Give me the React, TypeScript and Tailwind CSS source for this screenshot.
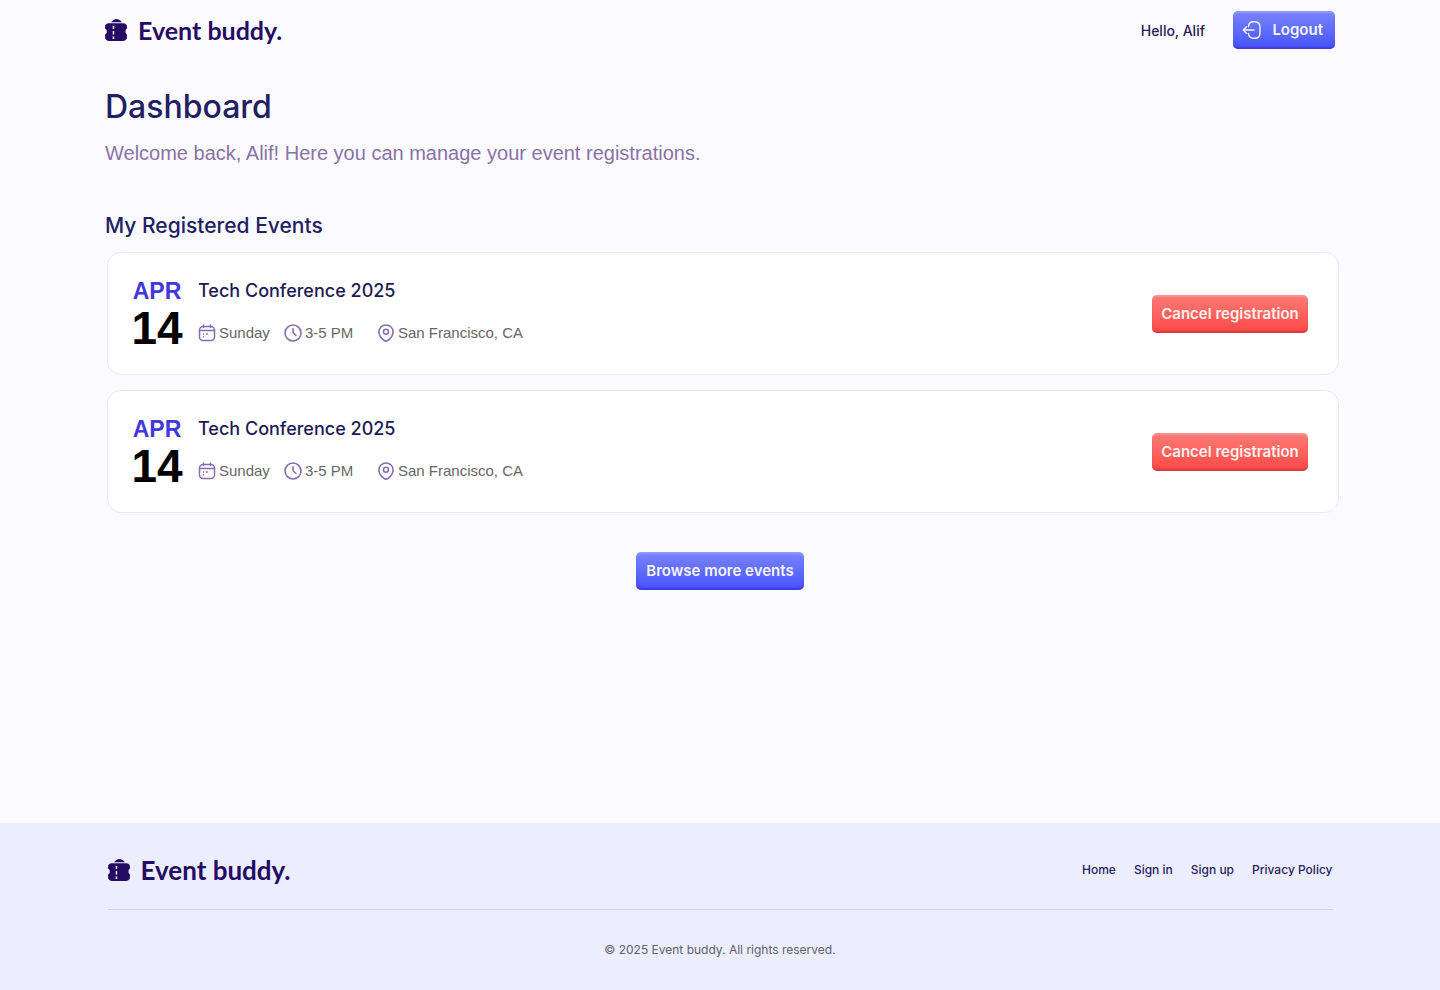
type EventItem = {
  id: number;
  month: string;
  day: string;
  title: string;
  weekday: string;
  time: string;
  location: string;
};

const registeredEvents: EventItem[] = [
  {
    id: 1,
    month: "APR",
    day: "14",
    title: "Tech Conference 2025",
    weekday: "Sunday",
    time: "3-5 PM",
    location: "San Francisco, CA"
  },
  {
    id: 2,
    month: "APR",
    day: "14",
    title: "Tech Conference 2025",
    weekday: "Sunday",
    time: "3-5 PM",
    location: "San Francisco, CA"
  }
];

const footerLinks = ["Home", "Sign in", "Sign up", "Privacy Policy"];

const blueButton =
  "rounded-[5px] bg-linear-to-b from-[#7b83fc] to-[#4552fb] text-[15px] font-semibold text-[#f4f3ff] shadow-[inset_0_2px_2px_rgba(255,255,255,0.2),inset_0_-2px_2px_rgba(60,30,190,0.5)]";

const redButton =
  "rounded-[5px] bg-linear-to-b from-[#fb7a76] to-[#fd4646] text-[15px] font-semibold text-[#fff0ee] shadow-[inset_0_2px_2px_rgba(255,255,255,0.2),inset_0_-2px_2px_rgba(170,50,60,0.5)]";

function Logo({ large = false }: { large?: boolean }) {
  return (
    <a href="#" className="flex items-center gap-[11px] text-[#250b63]">
      <svg width="22" height="24" viewBox="0 0 22 24" fill="currentColor" aria-hidden="true">
        <path d="M6 4.300C7.500 2.600 9.500 1 11.500 1s4 1.600 5.500 3.300z" />
        <path
          fillRule="evenodd"
          d="M4 5.300h14c2.600 0 4 1.500 4 4v1.200c-1 .5-1.500 1.500-1.500 3s.5 2.500 1.500 3v2.100c0 3-1.500 4.400-4.400 4.400H4.400C1.500 23 0 21.600 0 18.600v-2.100c1.200-.5 1.800-1.500 1.800-3S1.200 11 0 10.500V9.300c0-2.500 1.400-4 4-4zM7.700 8v3h1.500V8zm0 5v3.500h1.500V13zm0 5.500v2.500h1.500v-2.500z"
        />
      </svg>
      <span className={`font-['Lato',sans-serif] leading-8 font-bold ${large ? "text-[26px]" : "text-[25px]"}`}>
        Event buddy.
      </span>
    </a>
  );
}

function LogoutIcon() {
  return (
    <svg width="20" height="20" viewBox="0 0 20 20" fill="none" stroke="currentColor" strokeWidth="1.4" strokeLinecap="round" strokeLinejoin="round" aria-hidden="true">
      <path d="M6.500 6.500C6.700 3.200 8.200 1.800 11.500 1.800h1.200c3.600 0 5.300 1.700 5.300 5.300v5.800c0 3.600-1.700 5.300-5.300 5.300h-1.200c-3.300 0-4.800-1.400-5-4.700" />
      <path d="M12 10H1.500M4.500 6.800L1.300 10l3.200 3.200" />
    </svg>
  );
}

function CalendarIcon() {
  return (
    <svg width="18" height="18" viewBox="0 0 18 18" fill="none" stroke="currentColor" strokeWidth="1.5" strokeLinecap="round" strokeLinejoin="round" aria-hidden="true">
      <rect x="1.500" y="2.500" width="15" height="14" rx="3.500" />
      <path d="M5.500 1v2.500M12.500 1v2.500M1.500 6.500h15M5.500 10h.01M8.500 10h1M5.500 12.800h.01" />
    </svg>
  );
}

function ClockIcon() {
  return (
    <svg width="18" height="18" viewBox="0 0 18 18" fill="none" stroke="currentColor" strokeWidth="1.6" strokeLinecap="round" strokeLinejoin="round" aria-hidden="true">
      <circle cx="9" cy="9" r="8" />
      <path d="M9 4.800v3c0 .8.200 1.200.8 1.700l2.200 2" />
    </svg>
  );
}

function PinIcon() {
  return (
    <svg width="18" height="18" viewBox="0 0 18 18" fill="none" stroke="currentColor" strokeWidth="1.6" strokeLinecap="round" strokeLinejoin="round" aria-hidden="true">
      <path d="M9 1C4.900 1 1.900 4 1.900 7.900c0 3.700 2.200 6.300 5.300 8.600 1.200.8 2.400.8 3.600 0 3.100-2.300 5.300-4.900 5.300-8.600C16.100 4 13.100 1 9 1z" />
      <circle cx="9" cy="7.800" r="2.500" />
    </svg>
  );
}

function EventCard({ event }: { event: EventItem }) {
  return (
    <li className="flex items-center justify-between rounded-[14px] border border-[#e9e8f5] bg-white pt-6 pr-[30px] pb-[23px] pl-6">
      <div className="flex gap-4">
        <div className="flex w-[50px] flex-col items-center font-['Liberation_Sans',Arial,sans-serif] font-bold">
          <span className="text-[23px] leading-7 text-[#4338dc]">{event.month}</span>
          <span className="text-[46px] leading-[46px] text-black">{event.day}</span>
        </div>
        <div>
          <h3 className="text-[18px] leading-7 font-medium text-[#1d1b54]">{event.title}</h3>
          <div className="mt-4 flex items-center font-['Liberation_Sans',Arial,sans-serif] text-[15px] leading-6 text-[#666666]">
            <span className="flex w-[86px] items-center gap-[3px]">
              <span className="text-[#8570ad]"><CalendarIcon /></span>
              {event.weekday}
            </span>
            <span className="flex w-[93px] items-center gap-[3px]">
              <span className="text-[#8570ad]"><ClockIcon /></span>
              {event.time}
            </span>
            <span className="flex items-center gap-[3px]">
              <span className="text-[#8570ad]"><PinIcon /></span>
              {event.location}
            </span>
          </div>
        </div>
      </div>
      <button type="button" className={`h-[38px] w-[156px] ${redButton}`}>
        Cancel registration
      </button>
    </li>
  );
}

export default function App() {
  return (
    <div className="flex min-h-screen flex-col bg-[#fbfaff] font-['Inter',sans-serif]">
      <header className="mx-auto flex h-[60px] w-full max-w-[1230px] items-center justify-between">
        <Logo />
        <div className="flex items-center gap-7">
          <p className="text-[14px] font-medium text-[#242253]">Hello, Alif</p>
          <button type="button" className={`flex h-[38px] w-[102px] items-center justify-between pr-3 pl-[9px] ${blueButton}`}>
            <LogoutIcon />
            Logout
          </button>
        </div>
      </header>

      <main className="mx-auto w-full max-w-[1230px] pt-6">
        <h1 className="text-[32px] leading-[46px] font-medium text-[#212061]">Dashboard</h1>
        <p className="mt-2 font-['Liberation_Sans',Arial,sans-serif] text-[20px] leading-[30px] text-[#8b72a6]">
          Welcome back, Alif! Here you can manage your event registrations.
        </p>

        <h2 className="mt-10 text-[21px] leading-9 font-medium text-[#212061]">My Registered Events</h2>
        <ul className="mt-2 -mr-1 ml-[2px] space-y-[15px]">
          {registeredEvents.map((event) => (
            <EventCard key={event.id} event={event} />
          ))}
        </ul>

        <div className="flex justify-center pt-[39px] pb-16">
          <button type="button" className={`h-[38px] w-[168px] ${blueButton}`}>
            Browse more events
          </button>
        </div>
      </main>

      <footer className="mt-auto bg-[#ecedff]">
        <div className="mx-auto w-full max-w-[1225px]">
          <div className="flex h-[87px] items-center justify-between border-b border-[#d3d3ea] pt-2">
            <Logo large />
            <nav className="flex gap-[18px] text-[12px] font-medium text-[#29225f]">
              {footerLinks.map((link) => (
                <a key={link} href="#">
                  {link}
                </a>
              ))}
            </nav>
          </div>
          <p className="py-[30px] text-center text-[12px] leading-5 text-[#62616d]">
            © 2025 Event buddy. All rights reserved.
          </p>
        </div>
      </footer>
    </div>
  );
}
